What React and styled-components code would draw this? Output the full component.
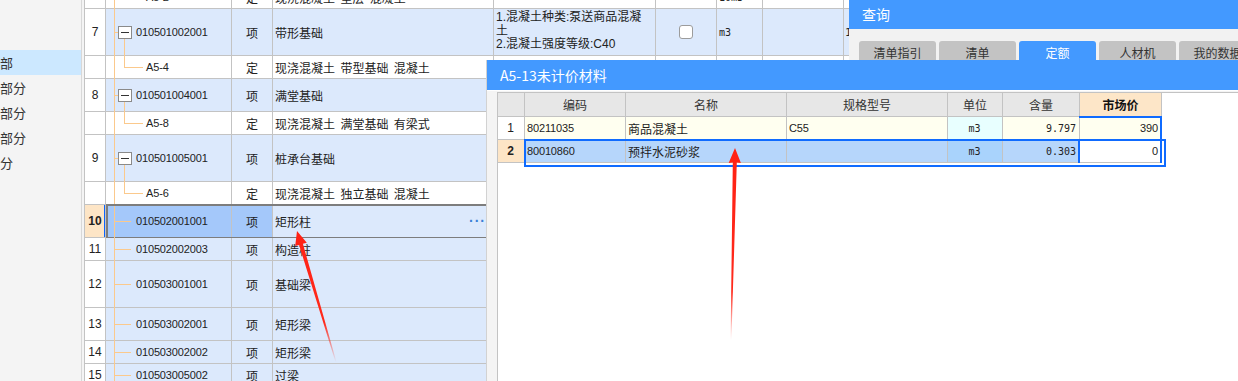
import styled, { createGlobalStyle } from 'styled-components';

const BLUE = '#4399ff';
const GRID = '#c3c3c3';
const ORANGE = '#fbc98c';
const SEL = '#0f6bff';
const CJK = '"Noto Sans CJK SC", sans-serif';
const NUM = '"Liberation Sans", "Noto Sans CJK SC", sans-serif';
const MONO = '"DejaVu Sans Mono", "Liberation Mono", monospace';

const GlobalStyle = createGlobalStyle`
  html, body { margin: 0; padding: 0; background: #fff; overflow: hidden; }
  body { font-family: ${CJK}; color: #222; }
  * { box-sizing: border-box; }
`;

const sideItems = [
  { text: '部', active: true },
  { text: '部分' },
  { text: '部分' },
  { text: '部分' },
  { text: '分' },
];

const rows = [
  { kind: 'child', code: 'A5-2', type: '定', name: '现浇混凝土  垫层  混凝土', unit: '10m3', h: 23 },
  {
    kind: 'parent', num: '7', code: '010501002001', type: '项', name: '带形基础', h: 47,
    desc: ['1.混凝土种类:泵送商品混凝', '土', '2.混凝土强度等级:C40'], check: true, unit: 'm3', extra: '10',
  },
  { kind: 'child', code: 'A5-4', type: '定', name: '现浇混凝土  带型基础  混凝土', h: 23 },
  { kind: 'parent', num: '8', code: '010501004001', type: '项', name: '满堂基础', h: 33 },
  { kind: 'child', code: 'A5-8', type: '定', name: '现浇混凝土  满堂基础  有梁式', h: 23 },
  { kind: 'parent', num: '9', code: '010501005001', type: '项', name: '桩承台基础', h: 47 },
  { kind: 'child', code: 'A5-6', type: '定', name: '现浇混凝土  独立基础  混凝土', h: 23 },
  { kind: 'leaf', num: '10', code: '010502001001', type: '项', name: '矩形柱', h: 33, active: true },
  { kind: 'leaf', num: '11', code: '010502002003', type: '项', name: '构造柱', h: 23 },
  { kind: 'leaf', num: '12', code: '010503001001', type: '项', name: '基础梁', h: 47 },
  { kind: 'leaf', num: '13', code: '010503002001', type: '项', name: '矩形梁', h: 33 },
  { kind: 'leaf', num: '14', code: '010503002002', type: '项', name: '矩形梁', h: 23 },
  { kind: 'leaf', num: '15', code: '010503005002', type: '项', name: '过梁', h: 23 },
];

const tabs = ['清单指引', '清单', '定额', '人材机', '我的数据'];

const materials = [
  { num: '1', code: '80211035', name: '商品混凝土', spec: 'C55', unit: 'm3', qty: '9.797', price: '390' },
  { num: '2', code: '80010860', name: '预拌水泥砂浆', spec: '', unit: 'm3', qty: '0.303', price: '0', active: true },
];

const TreeLines = ({ kind }) => (
  <>
    <Trunk />
    {kind === 'parent' && (
      <>
        <Stub $w={4} />
        <FoldBox />
        <Drop />
      </>
    )}
    {kind === 'leaf' && <Stub $w={17} />}
    {kind === 'child' && (
      <>
        <Rise />
        <Branch />
      </>
    )}
  </>
);

const App = () => {
  return (
    <Screen>
      <GlobalStyle />
      <Sidebar>
        {sideItems.map((item, i) => (
          <SideItem key={i} $active={item.active}>
            {item.text}
          </SideItem>
        ))}
      </Sidebar>
      <Splitter />
      <Table>
        {rows.map((row, i) => {
          const item = row.kind !== 'child';
          return (
            <Row key={i} $h={row.h} $active={row.active}>
              <NumCell $active={row.active}>{row.num}</NumCell>
              <CodeCell $item={item} $active={row.active} $child={row.kind === 'child'}>
                <TreeLines kind={row.kind} />
                {row.code}
              </CodeCell>
              <TypeCell $item={item} $active={row.active}>{row.type}</TypeCell>
              <NameCell $item={item}>
                {row.name}
                {row.active && <More>···</More>}
              </NameCell>
              <DescCell $item={item}>
                {row.desc && row.desc.map((line, j) => <div key={j}>{line}</div>)}
              </DescCell>
              <CheckCell $item={item}>{row.check && <CheckBox />}</CheckCell>
              <UnitCell $item={item}>{row.unit}</UnitCell>
              <BlankCell $item={item} />
              <ExtraCell $item={item}>{row.extra}</ExtraCell>
            </Row>
          );
        })}
      </Table>

      <QueryPanel>
        <PanelTitle>查询</PanelTitle>
        <TabBar>
          {tabs.map((t) => (
            <Tab key={t} $active={t === '定额'}>{t}</Tab>
          ))}
        </TabBar>
      </QueryPanel>

      <Dialog>
        <DialogTitle>A5-13未计价材料</DialogTitle>
        <DialogBody>
          <Grid>
            <GridRow $h={24}>
              <GHead $w={27} />
              <GHead $w={101}>编码</GHead>
              <GHead $w={161}>名称</GHead>
              <GHead $w={161}>规格型号</GHead>
              <GHead $w={55}>单位</GHead>
              <GHead $w={77}>含量</GHead>
              <GHead $w={82} $accent>市场价</GHead>
            </GridRow>
            {materials.map((m) => (
              <GridRow key={m.num} $h={23} $selected={m.active}>
                <GNum $active={m.active}>{m.num}</GNum>
                <GCell $w={101} $bg={m.active ? '#b6d6fb' : '#fffff0'}>
                  <Code>{m.code}</Code>
                </GCell>
                <GCell $w={161} $bg={m.active ? '#b6d6fb' : '#fffff0'}>{m.name}</GCell>
                <GCell $w={161} $bg={m.active ? '#b6d6fb' : '#fffff0'}>
                  <Code>{m.spec}</Code>
                </GCell>
                <GCell $w={55} $bg={m.active ? '#a9d3fc' : '#e8ffff'} $align="center">
                  <Mono>{m.unit}</Mono>
                </GCell>
                <GCell $w={77} $bg={m.active ? '#b6d6fb' : '#fffff0'} $align="flex-end">
                  <Mono>{m.qty}</Mono>
                </GCell>
                <PriceCell $active={m.active}>
                  <Code>{m.price}</Code>
                </PriceCell>
              </GridRow>
            ))}
          </Grid>
        </DialogBody>
      </Dialog>

      <Annotations viewBox="0 0 1238 381">
        <defs>
          <linearGradient id="arrowA" gradientUnits="userSpaceOnUse" x1="297" y1="231" x2="336" y2="362">
            <stop offset="0" stopColor="#ff2114" />
            <stop offset="0.7" stopColor="#ff2a1c" />
            <stop offset="1" stopColor="#ff2a1c" stopOpacity="0" />
          </linearGradient>
          <linearGradient id="arrowB" gradientUnits="userSpaceOnUse" x1="735" y1="148" x2="731" y2="340">
            <stop offset="0" stopColor="#ff2114" />
            <stop offset="0.75" stopColor="#ff2a1c" />
            <stop offset="1" stopColor="#ff2a1c" stopOpacity="0" />
          </linearGradient>
        </defs>
        <polygon
          fill="url(#arrowA)"
          points="297,231 295.2,246.1 299.1,245 335.5,362.1 336.5,361.9 302.9,243.8 306.8,242.7"
        />
        <polygon
          fill="url(#arrowB)"
          points="735,148 728.7,163 732.8,162.5 730.6,340 731.4,340 736.8,162.5 740.9,163"
        />
      </Annotations>
    </Screen>
  );
};

export default App;

const Screen = styled.div`
  position: relative;
  display: flex;
  align-items: flex-start;
  width: 1238px;
  height: 381px;
  overflow: hidden;
  background: #fff;
`;

const Sidebar = styled.aside`
  flex: 0 0 82px;
  align-self: stretch;
  padding-top: 50px;
  background: #f4f4f4;
  border-right: 1px solid #d8d8d8;
`;

const SideItem = styled.div`
  height: 25px;
  line-height: 25px;
  font-size: 13px;
  color: #333;
  background: ${(p) => (p.$active ? '#cce8ff' : 'transparent')};
`;

const Splitter = styled.div`
  flex: 0 0 2px;
  align-self: stretch;
  background: #f4f4f4;
`;

const Table = styled.div`
  display: flex;
  flex-direction: column;
  flex-shrink: 0;
  margin-top: -14px;
  border-left: 1px solid ${GRID};
`;

const Row = styled.div`
  position: relative;
  display: flex;
  flex: 0 0 ${(p) => p.$h}px;
  height: ${(p) => p.$h}px;
  font-size: 12px;

  ${(p) =>
    p.$active &&
    `
    &::after {
      content: '';
      position: absolute;
      left: 21px;
      top: -1px;
      width: 420px;
      bottom: -1px;
      border: 2px solid #7d7d7d;
      border-right: none;
      pointer-events: none;
    }
  `}
`;

const Cell = styled.div`
  position: relative;
  display: flex;
  align-items: center;
  flex-shrink: 0;
  height: 100%;
  border-right: 1px solid ${GRID};
  border-bottom: 1px solid ${GRID};
  background: ${(p) => (p.$active ? '#a4c8fa' : p.$item ? '#dce9fc' : '#fff')};
  white-space: pre;
  overflow: hidden;
`;

const NumCell = styled(Cell)`
  width: 21px;
  justify-content: center;
  font-family: ${NUM};
  font-size: 12px;
  font-weight: ${(p) => (p.$active ? 700 : 400)};
  background: ${(p) => (p.$active ? '#fde5c6' : '#fff')};
  color: #222;

  ${(p) =>
    p.$active &&
    `
    &::after {
      content: '';
      position: absolute;
      right: -1px;
      top: 0;
      bottom: 0;
      width: 2px;
      background: #0a64ff;
    }
  `}
`;

const CodeCell = styled(Cell)`
  width: 126px;
  padding-left: ${(p) => (p.$child ? 40 : 30)}px;
  font-family: ${NUM};
  font-size: 11px;
  letter-spacing: -0.15px;
  overflow: visible;
`;

const Trunk = styled.span`
  position: absolute;
  left: 8px;
  top: -1px;
  bottom: -1px;
  width: 1px;
  background: ${ORANGE};
`;

const Stub = styled.span`
  position: absolute;
  left: 8px;
  top: 50%;
  width: ${(p) => p.$w}px;
  height: 1px;
  background: ${ORANGE};
`;

const FoldBox = styled.span`
  position: absolute;
  left: 12px;
  top: calc(50% - 6px);
  width: 14px;
  height: 13px;
  border: 1px solid #8a8a8a;
  background: #fff;

  &::after {
    content: '';
    position: absolute;
    left: 2px;
    right: 2px;
    top: 5px;
    height: 1px;
    background: #333;
  }
`;

const Drop = styled.span`
  position: absolute;
  left: 18px;
  top: calc(50% + 7px);
  bottom: -1px;
  width: 1px;
  background: ${ORANGE};
`;

const Rise = styled.span`
  position: absolute;
  left: 18px;
  top: -1px;
  height: calc(50% + 1px);
  width: 1px;
  background: ${ORANGE};
`;

const Branch = styled.span`
  position: absolute;
  left: 18px;
  top: 50%;
  width: 19px;
  height: 1px;
  background: ${ORANGE};
`;

const TypeCell = styled(Cell)`
  width: 41px;
  justify-content: center;
  font-size: 12px;
`;

const NameCell = styled(Cell)`
  width: 221px;
  padding-left: 2px;
  justify-content: space-between;
  font-size: 12px;
`;

const More = styled.span`
  margin-right: 7px;
  font-family: ${NUM};
  font-size: 14px;
  font-weight: 700;
  letter-spacing: 1px;
  color: #3a7fd6;
`;

const DescCell = styled(Cell)`
  width: 162px;
  flex-direction: column;
  align-items: flex-start;
  justify-content: flex-start;
  padding: 2px 0 0 2px;
  font-family: ${NUM};
  font-size: 12px;
  line-height: 13.5px;
`;

const CheckCell = styled(Cell)`
  width: 61px;
  justify-content: center;
`;

const CheckBox = styled.span`
  width: 14px;
  height: 14px;
  border: 1px solid #9c9c9c;
  border-radius: 3px;
  background: #fff;
`;

const UnitCell = styled(Cell)`
  width: 46px;
  padding-left: 2px;
  font-family: ${MONO};
  font-size: 10px;
`;

const BlankCell = styled(Cell)`
  width: 81px;
`;

const ExtraCell = styled(Cell)`
  width: 100px;
  padding-left: 1px;
  font-family: ${MONO};
  font-size: 11px;
`;

const QueryPanel = styled.section`
  position: absolute;
  left: 849px;
  top: 0;
  z-index: 2;
  width: 389px;
  height: 70px;
  background: #f2f2f2;
`;

const PanelTitle = styled.div`
  height: 29px;
  padding-left: 13px;
  line-height: 29px;
  font-size: 14px;
  color: #fff;
  background: ${BLUE};
`;

const TabBar = styled.div`
  display: flex;
  gap: 3px;
  padding: 12px 0 0 10px;
`;

const Tab = styled.div`
  flex: 0 0 77px;
  height: 26px;
  line-height: 24px;
  text-align: center;
  font-size: 12px;
  border-radius: 3px 3px 0 0;
  color: ${(p) => (p.$active ? '#fff' : '#333')};
  background: ${(p) => (p.$active ? BLUE : '#c3c3c3')};
`;

const Dialog = styled.section`
  position: absolute;
  left: 486px;
  top: 60px;
  z-index: 3;
  display: flex;
  flex-direction: column;
  width: 752px;
  height: 321px;
  background: #f4f4f4;
  border-left: 1px solid #d2d2d2;
`;

const DialogTitle = styled.div`
  flex: 0 0 31px;
  display: flex;
  align-items: center;
  padding-left: 13px;
  font-size: 14px;
  color: #fff;
  background: ${BLUE};
  border-bottom: 1px solid #fff;
`;

const DialogBody = styled.div`
  flex: 1;
  display: flex;
  padding: 1px 0 0 10px;
`;

const Grid = styled.div`
  flex: 1;
  background: #fff;
  border-left: 1px solid ${GRID};
  border-top: 1px solid ${GRID};
`;

const GridRow = styled.div`
  position: relative;
  display: flex;
  height: ${(p) => p.$h}px;
  font-size: 12px;

  ${(p) =>
    p.$selected &&
    `
    &::after {
      content: '';
      position: absolute;
      left: 26px;
      top: -1px;
      width: 638px;
      height: 24px;
      border: 2px solid ${SEL};
      pointer-events: none;
    }
  `}
`;

const GHead = styled.div`
  flex: 0 0 ${(p) => p.$w}px;
  display: flex;
  align-items: center;
  justify-content: center;
  border-right: 1px solid ${GRID};
  border-bottom: 1px solid ${GRID};
  font-size: 12px;
  font-weight: ${(p) => (p.$accent ? 700 : 400)};
  color: ${(p) => (p.$accent ? '#111' : '#333')};
  background: ${(p) => (p.$accent ? '#fde6c8' : '#e7e7e7')};
`;

const GCell = styled.div`
  position: relative;
  flex: 0 0 ${(p) => p.$w}px;
  display: flex;
  align-items: center;
  justify-content: ${(p) => p.$align || 'flex-start'};
  padding: 0 3px 0 2px;
  border-right: 1px solid ${GRID};
  border-bottom: 1px solid ${GRID};
  background: ${(p) => p.$bg};
  white-space: nowrap;
`;

const GNum = styled(GCell).attrs({ $w: 27, $align: 'center' })`
  font-family: ${NUM};
  font-weight: ${(p) => (p.$active ? 700 : 400)};
  background: ${(p) => (p.$active ? '#fde5c6' : '#fff')};
`;

const PriceCell = styled(GCell).attrs({ $w: 82, $align: 'flex-end' })`
  background: ${(p) => (p.$active ? '#fff' : '#fffff0')};

  &::after {
    content: '';
    position: absolute;
    left: ${(p) => (p.$active ? '-2px' : '-1px')};
    top: -1px;
    right: -1px;
    bottom: -1px;
    border-top: ${(p) => (p.$active ? 'none' : `2px solid ${SEL}`)};
    border-right: 2px solid ${SEL};
    border-left: ${(p) => (p.$active ? `2px solid ${SEL}` : 'none')};
    pointer-events: none;
  }
`;

const Code = styled.span`
  font-family: ${NUM};
  font-size: 11px;
  letter-spacing: -0.15px;
  color: #222;
`;

const Mono = styled.span`
  font-family: ${MONO};
  font-size: 10px;
  color: #222;
`;

const Annotations = styled.svg`
  position: absolute;
  left: 0;
  top: 0;
  z-index: 5;
  width: 1238px;
  height: 381px;
  pointer-events: none;
`;
